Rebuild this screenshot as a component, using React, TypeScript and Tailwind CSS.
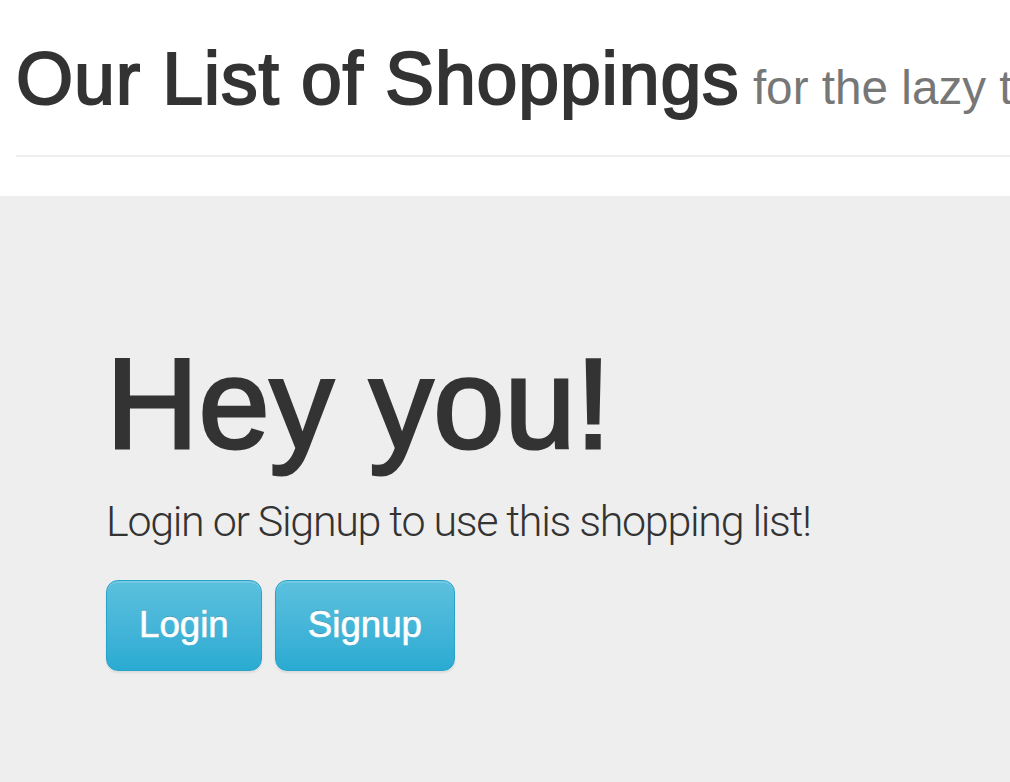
import React from 'react';

export default function App() {
  return (
    <div className="flex min-h-screen flex-col overflow-hidden bg-white font-['Liberation_Sans',Arial,sans-serif] text-[#333]">
      <div className="pl-4 pt-[39px]">
        <div className="border-b-2 border-[#eee] pb-[36px]">
          <h1 className="whitespace-nowrap text-[73.5px] leading-[80px] tracking-[0.8px] [-webkit-text-stroke:2px_#333]">
            Our List of Shoppings{' '}
            <small className="-ml-[8px] text-[47.7px] leading-none tracking-normal text-[#777] [-webkit-text-stroke:0px]">for the lazy t</small>
          </h1>
        </div>
      </div>

      <div className="mt-[39px] flex-1 bg-[#eee] pl-[106px] pt-[138px]">
        <h1 className="whitespace-nowrap text-[128px] leading-[140px] tracking-[0px] [-webkit-text-stroke:3px_#333]">
          Hey you!
        </h1>
        <p className="mt-[15px] whitespace-nowrap font-['Roboto',sans-serif] text-[43px] font-light leading-[64px] tracking-[-1.3px]">
          Login or Signup to use this shopping list!
        </p>
        <div className="mt-[27px] flex gap-[13px]">
          <LoginButton label="Login" />
          <LoginButton label="Signup" />
        </div>
      </div>
    </div>
  );
}

function LoginButton({ label }: { label: string }) {
  return (
    <button
      type="button"
      className="rounded-[12px] border border-[#28a4c9] bg-gradient-to-b from-[#5bc0de] to-[#2aabd2] px-[32px] pt-[20px] pb-[21px] text-[36.7px] leading-[48px] text-white shadow-[inset_0_2px_0_rgba(255,255,255,0.15),0_2px_2px_rgba(0,0,0,0.075)] [text-shadow:0_-1px_0_rgba(0,0,0,0.2)] [-webkit-text-stroke:0.6px_#fff]"
    >
      {label}
    </button>
  );
}
